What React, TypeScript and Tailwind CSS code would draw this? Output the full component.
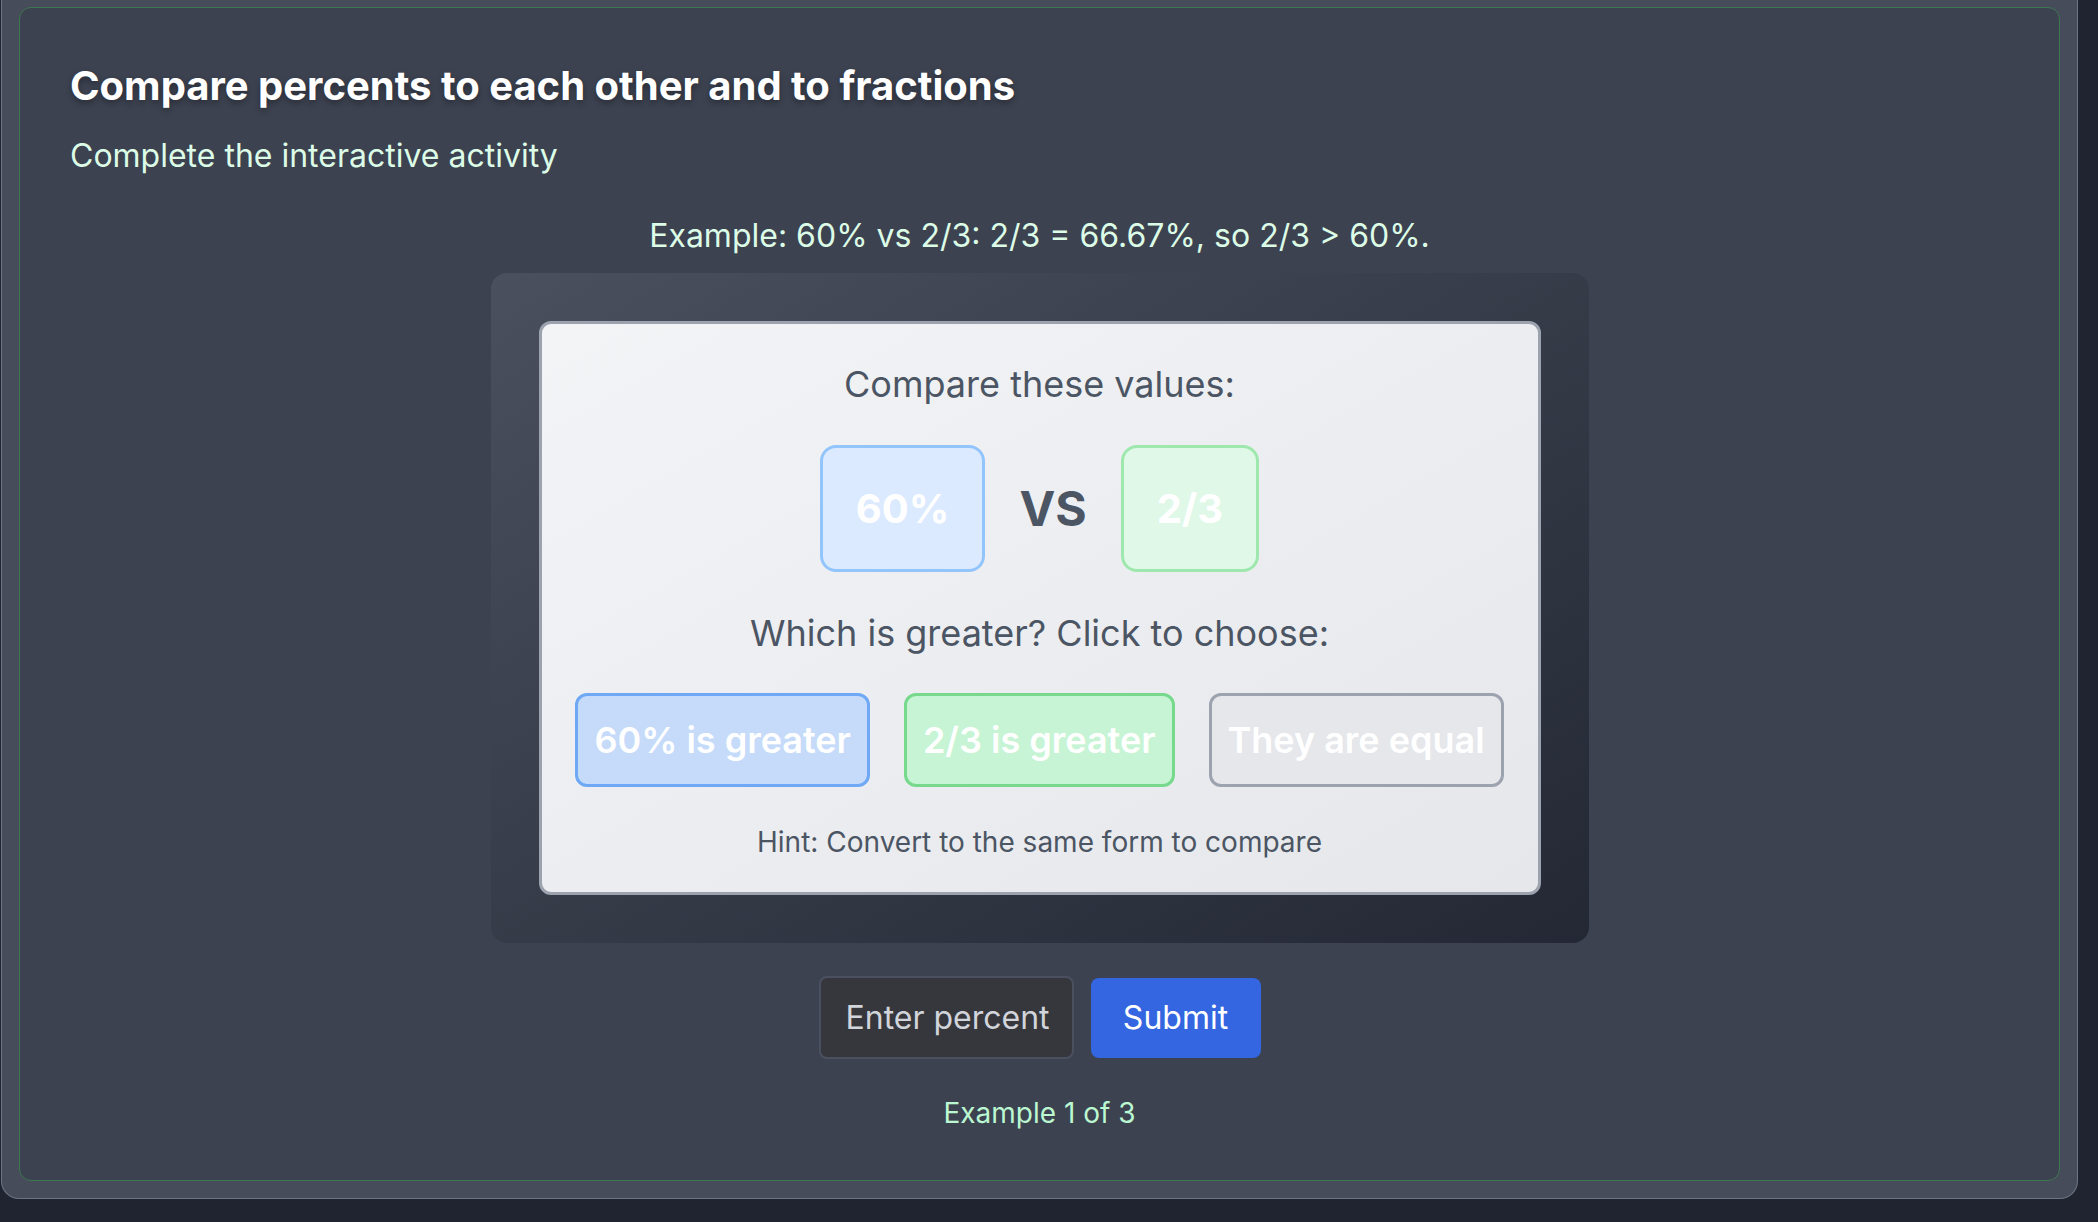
import React from 'react'

const choices = [
  { label: '60% is greater', cls: 'bg-[#c5dbf9] border-[#6fa8f5]' },
  { label: '2/3 is greater', cls: 'bg-[#c6f4d4] border-[#76d98c]' },
  { label: 'They are equal', cls: 'bg-[#e5e7eb] border-[#9ca3af]' },
]

function CompareCard() {
  return (
    <div className="w-[1098px] mx-auto rounded-[16px] p-[48px] bg-gradient-to-br from-[#4a505d] to-[#242835]">
      <div className="rounded-[12px] border-[3px] border-[#9ca3af] bg-gradient-to-br from-[#f3f4f6] to-[#e5e7eb] pt-[36px] pb-[30px] flex flex-col items-center">
        <div className="text-[36px] leading-[48px] text-[#4b5563]">Compare these values:</div>
        <div className="mt-[37px] flex items-center gap-[34px]">
          <div className="h-[127px] px-[33px] flex items-center rounded-[16px] border-[3px] border-[#93c5fd] bg-[#dbeafe] text-white font-bold text-[40px]">
            60%
          </div>
          <div className="text-[48px] font-bold text-[#4b5563]">VS</div>
          <div className="h-[127px] px-[33px] flex items-center rounded-[16px] border-[3px] border-[#9ee8ae] bg-[#e0f8e8] text-white font-bold text-[40px]">
            2/3
          </div>
        </div>
        <div className="mt-[37px] text-[36px] leading-[48px] text-[#4b5563]">
          Which is greater? Click to choose:
        </div>
        <div className="mt-[36px] flex gap-[34px]">
          {choices.map((c) => (
            <button
              key={c.label}
              className={`h-[94px] px-[16px] rounded-[12px] border-[3px] text-white font-semibold text-[36px] ${c.cls}`}
            >
              {c.label}
            </button>
          ))}
        </div>
        <div className="mt-[35px] text-[28px] leading-[40px] text-[#4b5563]">
          Hint: Convert to the same form to compare
        </div>
      </div>
    </div>
  )
}

export default function App() {
  return (
    <div className="min-h-screen bg-[#1f2430] font-['Inter',sans-serif]">
      <div className="ml-[1px] w-[2077px] pt-[7px] px-[17px] pb-[17px] bg-[#464c5a] border border-t-0 border-[#6e7482] rounded-b-[18px]">
        <div className="rounded-[12px] border border-[#3e7850] bg-[#3c4250] px-[50px] pt-[54px] pb-[47px]">
          <h1 className="text-[40px] leading-[48px] font-bold text-white [text-shadow:0_3px_6px_rgba(0,0,0,0.35)]">
            Compare percents to each other and to fractions
          </h1>
          <p className="mt-[26px] text-[32px] leading-[40px] text-[#dcfce7]">
            Complete the interactive activity
          </p>
          <p className="mt-[40px] text-center text-[32px] leading-[40px] text-[#dcfce7]">
            Example: 60% vs 2/3: 2/3 = 66.67%, so 2/3 &gt; 60%.
          </p>
          <div className="mt-[17px]">
            <CompareCard />
          </div>
          <div className="mt-[33px] flex items-center justify-center gap-[17px]">
            <input
              placeholder="Enter percent"
              className="w-[255px] h-[83px] pl-[25px] pr-[16px] rounded-[8px] border-2 border-[#4b5060] bg-[#36373c] text-[32px] text-[#e5e7eb] placeholder:text-[#d1d5db] outline-none"
            />
            <button className="w-[170px] h-[80px] rounded-[8px] bg-[#3366e0] text-white text-[32px]">
              Submit
            </button>
          </div>
          <div className="mt-[34px] text-center text-[28px] leading-[40px] text-[#bbf7d0]">
            Example 1 of 3
          </div>
        </div>
      </div>
    </div>
  )
}
